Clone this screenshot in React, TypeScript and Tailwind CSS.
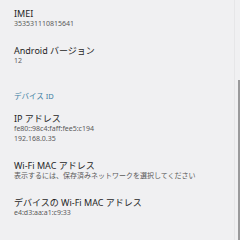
import React from 'react';

type Item = { title: string; lines: string[] };

const top: Item[] = [
  { title: 'IMEI', lines: ['353531110815641'] },
  { title: 'Android バージョン', lines: ['12'] },
];

const device: Item[] = [
  { title: 'IP アドレス', lines: ['fe80::98c4:faff:fee5:c194', '192.168.0.35'] },
  { title: 'Wi-Fi MAC アドレス', lines: ['表示するには、保存済みネットワークを選択してください'] },
  { title: 'デバイスの Wi-Fi MAC アドレス', lines: ['e4:d3:aa:a1:c9:33'] },
];

function Row({ item }: { item: Item }) {
  return (
    <div className="pl-[14px] pt-[8px] pb-[8px]">
      <p className="text-[9px] leading-[11px] text-[#1f1f1f]">{item.title}</p>
      {item.lines.map((l) => (
        <p key={l} className="text-[7px] leading-[10px] text-[#5a5a5a]">
          {l}
        </p>
      ))}
    </div>
  );
}

export default function App() {
  return (
    <div
      className="relative w-[240px] h-[240px] overflow-hidden bg-[#f0f0f2]"
      style={{ fontFamily: '"Noto Sans", "Noto Sans CJK JP", sans-serif' }}
    >
      <div className="flex flex-col">
        {top.map((it) => (
          <Row key={it.title} item={it} />
        ))}
        <p className="pl-[14px] pt-[17px] pb-[4px] text-[7.5px] leading-[10px] text-[#3f7fa3]">
          デバイス ID
        </p>
        {device.map((it) => (
          <Row key={it.title} item={it} />
        ))}
      </div>
      <div className="absolute right-[5px] top-0 bottom-0 w-px bg-[#e6e6e8]" />
      <div className="absolute right-0 top-[80px] bottom-0 w-[2px] bg-[#9a9a9c]" />
    </div>
  );
}
